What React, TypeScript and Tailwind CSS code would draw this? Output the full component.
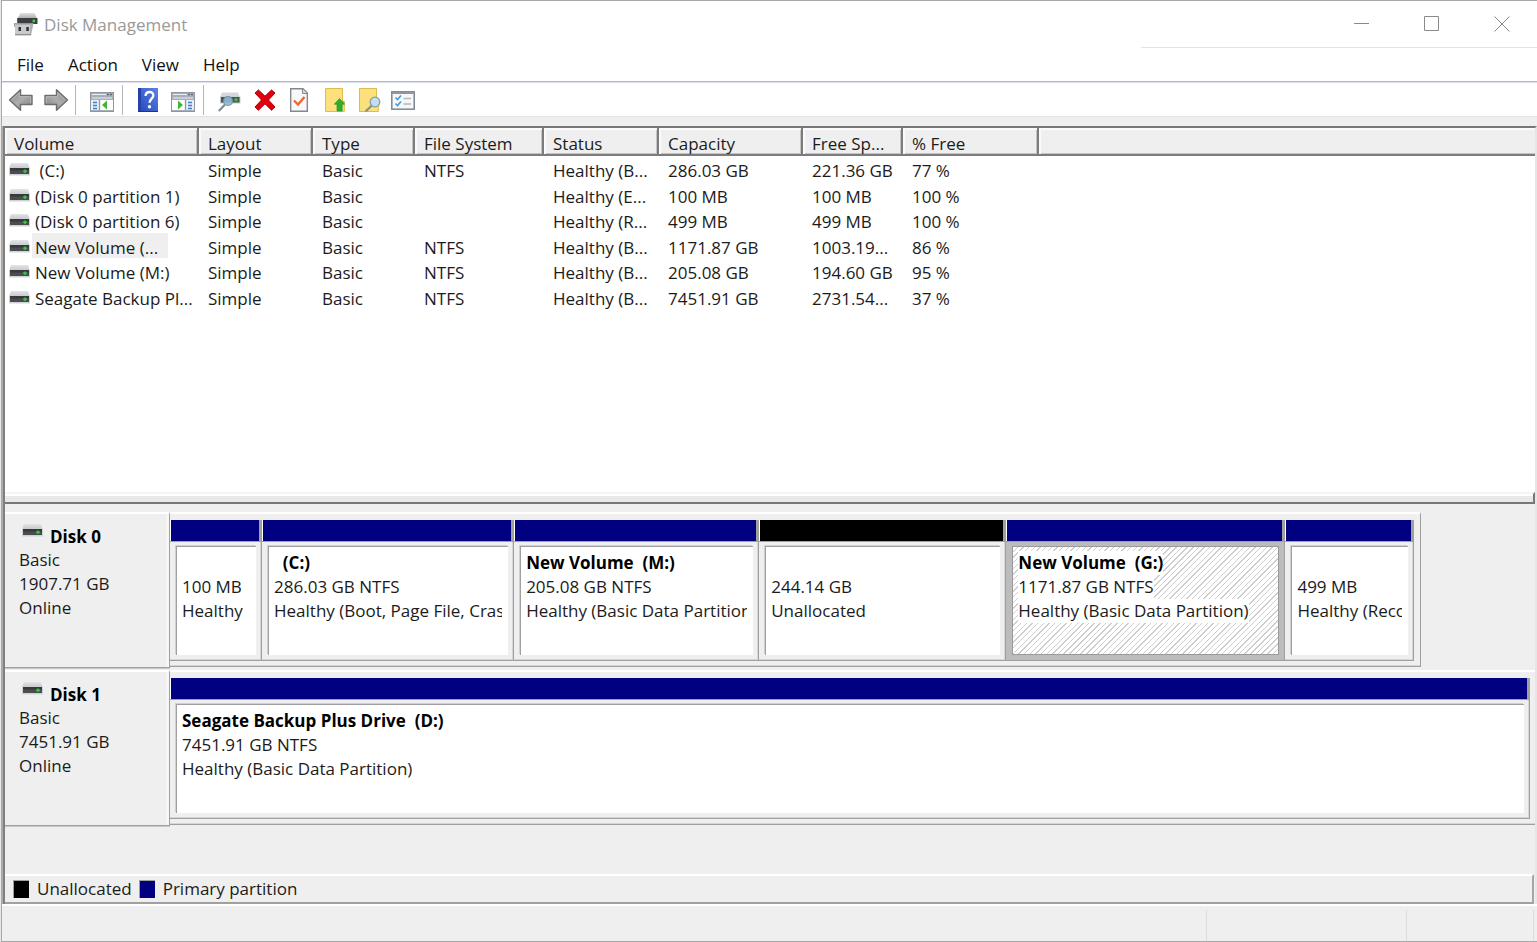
import React, { type ReactNode } from "react";

const HATCH =
  "bg-[repeating-linear-gradient(135deg,#ffffff_0px,#ffffff_3px,#cecece_3px,#cecece_4px)]";

type Volume = { name: string; cells: string[]; selected?: boolean; indent?: boolean };

const columns = [
  { label: "Volume", width: "w-[194px]" },
  { label: "Layout", width: "w-[114px]" },
  { label: "Type", width: "w-[102px]" },
  { label: "File System", width: "w-[129px]" },
  { label: "Status", width: "w-[115px]" },
  { label: "Capacity", width: "w-[144px]" },
  { label: "Free Sp...", width: "w-[100px]" },
  { label: "% Free", width: "w-[136px]" },
];

const volumes: Volume[] = [
  { name: "(C:)", indent: true, cells: ["Simple", "Basic", "NTFS", "Healthy (B...", "286.03 GB", "221.36 GB", "77 %"] },
  { name: "(Disk 0 partition 1)", cells: ["Simple", "Basic", "", "Healthy (E...", "100 MB", "100 MB", "100 %"] },
  { name: "(Disk 0 partition 6)", cells: ["Simple", "Basic", "", "Healthy (R...", "499 MB", "499 MB", "100 %"] },
  { name: "New Volume (...", selected: true, cells: ["Simple", "Basic", "NTFS", "Healthy (B...", "1171.87 GB", "1003.19...", "86 %"] },
  { name: "New Volume (M:)", cells: ["Simple", "Basic", "NTFS", "Healthy (B...", "205.08 GB", "194.60 GB", "95 %"] },
  { name: "Seagate Backup Pl...", cells: ["Simple", "Basic", "NTFS", "Healthy (B...", "7451.91 GB", "2731.54...", "37 %"] },
];

type Partition = {
  title?: string;
  size: string;
  status: string;
  share: number;
  unallocated?: boolean;
  selected?: boolean;
};

type Disk = { name: string; size: string; share: number; rest: number; partitions: Partition[] };

const disks: Disk[] = [
  {
    name: "Disk 0",
    size: "1907.71 GB",
    share: 1250,
    rest: 115,
    partitions: [
      { size: "100 MB", status: "Healthy", share: 92 },
      { title: "\u00a0 (C:)", size: "286.03 GB NTFS", status: "Healthy (Boot, Page File, Crash", share: 252 },
      { title: "New Volume \u00a0(M:)", size: "205.08 GB NTFS", status: "Healthy (Basic Data Partition", share: 245 },
      { size: "244.14 GB", status: "Unallocated", share: 247, unallocated: true },
      { title: "New Volume \u00a0(G:)", size: "1171.87 GB NTFS", status: "Healthy (Basic Data Partition)", share: 279, selected: true },
      { size: "499 MB", status: "Healthy (Reco", share: 129 },
    ],
  },
  {
    name: "Disk 1",
    size: "7451.91 GB",
    share: 1365,
    rest: 0,
    partitions: [
      { title: "Seagate Backup Plus Drive \u00a0(D:)", size: "7451.91 GB NTFS", status: "Healthy (Basic Data Partition)", share: 1 },
    ],
  },
];

function DriveIcon() {
  return (
    <svg width="21" height="13" viewBox="0 0 21 13" className="block shrink-0" aria-hidden="true">
      <defs>
        <linearGradient id="drive-top" x1="0" y1="0" x2="0" y2="1">
          <stop offset="0" stopColor="#e3e5e8" />
          <stop offset="1" stopColor="#c6cacd" />
        </linearGradient>
      </defs>
      <path d="M1.800 0h17.200l1.500 5H.3z" fill="url(#drive-top)" />
      <rect x="0" y="4.500" width="21" height="8" rx=".5" fill="#cfd3d8" />
      <rect x="1" y="5" width="19" height="6" fill="#4b4e50" />
      <rect x="1" y="5" width="19" height="2.500" fill="#37393b" />
      <path d="M14 8.200h4M16 6.400v3.600" stroke="#2fdc3a" strokeWidth="1.300" />
    </svg>
  );
}

function AppIcon() {
  return (
    <svg width="24" height="24" viewBox="0 0 24 24" className="block" aria-hidden="true">
      <defs>
        <linearGradient id="app-top" x1="0" y1="0" x2="0" y2="1">
          <stop offset="0" stopColor="#e0e2e4" />
          <stop offset="1" stopColor="#a9acaf" />
        </linearGradient>
      </defs>
      <path d="M6.500 0h14l2.500 5.500H3.500z" fill="url(#app-top)" />
      <path d="M3.200 5h20.300v6H3.200z" fill="#3c3f41" />
      <circle cx="19.800" cy="8" r="1.400" fill="#3bd63f" />
      <path d="M.3 10h4v4h-4z" fill="#77797b" />
      <path d="M1 10.500h18.300l-2.300 11.700H1z" fill="#c9cacc" />
      <path d="M1 10.500h18.300v1.200H1z" fill="#a6a8aa" />
      <path d="M1 21h16.200v1.300H1z" fill="#8f9193" />
      <path d="M16 11.500h3.300l-2.200 9.500H16z" fill="#b0b2b4" />
      <path d="M4.500 14h2.500v4H4.500zM12.300 14h2.500v4h-2.500z" fill="#333333" />
    </svg>
  );
}

function ArrowIcon({ right = false }: { right?: boolean }) {
  return (
    <svg width="26" height="24" viewBox="0 0 26 24" className="block" aria-hidden="true">
      <defs>
        <linearGradient id={right ? "arrow-r" : "arrow-l"} x1="0" y1="0" x2="1" y2="1">
          <stop offset="0" stopColor="#8a8a8a" />
          <stop offset="0.5" stopColor="#acacac" />
          <stop offset="1" stopColor="#7c7c7c" />
        </linearGradient>
      </defs>
      <g transform={right ? "translate(26 0) scale(-1 1)" : undefined}>
        <path
          d="M1.500 12 12.500 1.800v5.700h11.500v9H12.500v5.700z"
          fill={right ? "url(#arrow-r)" : "url(#arrow-l)"}
          stroke="#6c6c6c"
          strokeWidth="1.400"
          strokeLinejoin="round"
        />
        <path d="M3.500 12 11.300 4.700v4h11.400v6.600" fill="none" stroke="#bdbdbd" strokeWidth=".9" />
      </g>
    </svg>
  );
}

function PaneIcon({ right = false }: { right?: boolean }) {
  return (
    <svg width="24" height="20" viewBox="0 0 24 20" className="block" aria-hidden="true">
      <rect x=".5" y=".5" width="23" height="19" fill="#fff" stroke="#8f969f" />
      <rect x="1" y="1" width="22" height="7" fill="#a7afba" />
      <path d="M2 2.500h14M2 6h20" stroke="#e9edf2" />
      <path d="M17 2.500h2M20 2.500h2" stroke="#5d6773" strokeWidth="1.500" />
      <g transform={right ? "translate(24 0) scale(-1 1)" : undefined}>
        <rect x="1" y="8" width="8" height="11" fill="#e8eef6" />
        <path d="M3 10.500h4M3 13.500h4M3 16.500h4" stroke="#3f7fc6" strokeWidth="1.400" />
        <path d="M9.500 8v11" stroke="#8f969f" strokeWidth="1.300" />
        <path d="M17 8.500v9L12 13z" fill="#3fb62f" />
      </g>
      <path d="M1 18.500h22" stroke="#a9afb7" />
    </svg>
  );
}

function HelpIcon() {
  return (
    <svg width="20" height="24" viewBox="0 0 20 24" className="block" aria-hidden="true">
      <defs>
        <linearGradient id="help-book" x1="0" y1="1" x2="1" y2="0">
          <stop offset="0" stopColor="#2446b8" />
          <stop offset="1" stopColor="#5c82e6" />
        </linearGradient>
      </defs>
      <rect width="20" height="24" fill="url(#help-book)" />
      <rect width="3" height="24" fill="#2343ab" />
      <path d="M0 23.500h20" stroke="#1b3590" />
      <path d="M7.500 8C7.800 5 9.700 3.900 11.800 4c2.700.200 4 2 3.400 4.400C14.600 10.700 11.700 11.200 11.600 14.700" fill="none" stroke="#fff" strokeWidth="2.300" />
      <circle cx="11.500" cy="18.800" r="1.700" fill="#fff" />
    </svg>
  );
}

function RescanIcon() {
  return (
    <svg width="23" height="20" viewBox="0 0 23 20" className="block" aria-hidden="true">
      <path d="M4 .5h16l2 5H2z" fill="#d5d7da" />
      <rect x="2" y="4.500" width="20.500" height="7" fill="#c6cacd" />
      <rect x="3" y="5" width="18.500" height="5.500" fill="#4f5356" />
      <path d="M16 7.800h4M18 6v3.600" stroke="#2fd43a" strokeWidth="1.300" />
      <circle cx="10" cy="9" r="4.500" fill="#8fb9d6" fillOpacity=".9" stroke="#6f93ab" strokeWidth="1.100" />
      <path d="M7 12.500.8 19" stroke="#7e8c96" strokeWidth="2.200" />
    </svg>
  );
}

function DeleteIcon() {
  return (
    <svg width="22" height="22" viewBox="0 0 22 22" className="block" aria-hidden="true">
      <path
        d="M1 4 4.500 1 11 7.200 17.500 1 21 4l-6.500 7 6.500 7-3.500 3.200L11 14.800l-6.500 6.400L1 18l6.500-7z"
        fill="#e2000f"
        stroke="#a8000b"
      />
    </svg>
  );
}

function PropertiesIcon() {
  return (
    <svg width="18" height="24" viewBox="0 0 18 24" className="block" aria-hidden="true">
      <path d="M.7.7h12.300l4.300 4.300v18.300H.7z" fill="#f7f8fa" stroke="#85898e" strokeWidth="1.400" />
      <path d="M12.500 1v4.500H17" fill="#d8dbe0" stroke="#85898e" />
      <path d="m4 12.500 4 4 6.500-7.500" fill="none" stroke="#f0642d" strokeWidth="2.300" />
    </svg>
  );
}

function FolderUpIcon() {
  return (
    <svg width="20" height="24" viewBox="0 0 20 24" className="block" aria-hidden="true">
      <path d="M.5.5h17v13h1.800v10H.5z" fill="#fbe07c" stroke="#dfbc4d" />
      <path d="M17.500 13.500h1.800" fill="none" stroke="#c59d3d" />
      <path d="M14.500 10.500 19.700 16.200h-2.500V23h-5.200v-6.800H9.300z" fill="#2fae2b" stroke="#1e9420" strokeWidth=".6" />
    </svg>
  );
}

function FolderSearchIcon() {
  return (
    <svg width="22" height="24" viewBox="0 0 22 24" className="block" aria-hidden="true">
      <path d="M.5.500h17v13h1.800v10H.5z" fill="#fbe07c" stroke="#dfbc4d" />
      <path d="M12.800 17.500 6.500 23.500" stroke="#8b8e8c" strokeWidth="2.200" />
      <circle cx="16" cy="14" r="4.800" fill="#c4e0f0" stroke="#7f9db0" strokeWidth="1.300" />
    </svg>
  );
}

function ChecklistIcon() {
  return (
    <svg width="24" height="19" viewBox="0 0 24 19" className="block" aria-hidden="true">
      <rect x=".8" y=".8" width="22.400" height="17.400" fill="#f6f7f9" stroke="#7f868f" strokeWidth="1.500" />
      <path d="M1 2h22" stroke="#8f969f" strokeWidth="2" />
      <path d="m4.500 6.500 2 2 3.500-4M4.500 12.500l2 2 3.500-4" fill="none" stroke="#3d9be0" strokeWidth="1.600" />
      <path d="M12.500 7.500h7.500M12.500 13h7.500" stroke="#b4b7bb" strokeWidth="1.300" />
    </svg>
  );
}

function ToolButton({ label, className, children }: { label: string; className: string; children: ReactNode }) {
  return (
    <button type="button" aria-label={label} className={`flex h-8 shrink-0 items-center ${className}`}>
      {children}
    </button>
  );
}

function Separator({ className }: { className: string }) {
  return <span className={`h-[30px] w-px shrink-0 bg-[#b4b4b4] ${className}`} />;
}

function TitleBar() {
  return (
    <header className="flex h-[47px] shrink-0 items-center pl-3">
      <AppIcon />
      <h1 className="ml-[6px] flex-1 text-[17px] leading-6 text-[#999999]">Disk Management</h1>
      <div className="flex h-full w-[396px] items-center justify-end border-b border-[#e4e4e4] text-[#8a8a8a]">
        <button type="button" aria-label="Minimize" className="flex h-full w-[70px] items-center justify-center">
          <svg width="16" height="16" viewBox="0 0 16 16"><path d="M0 7.500h15" stroke="currentColor" /></svg>
        </button>
        <button type="button" aria-label="Maximize" className="flex h-full w-[70px] items-center justify-center">
          <svg width="16" height="16" viewBox="0 0 16 16"><path d="M.5.5h14v14H.5z" fill="none" stroke="currentColor" /></svg>
        </button>
        <button type="button" aria-label="Close" className="flex h-full w-[70px] items-center justify-center">
          <svg width="16" height="16" viewBox="0 0 16 16"><path d="m.5.5 15 15m0-15-15 15" stroke="currentColor" /></svg>
        </button>
      </div>
    </header>
  );
}

function MenuBar() {
  return (
    <nav className="flex h-[33px] shrink-0 items-center gap-6 pl-[15px] text-[17px] leading-6 text-[#111111]">
      {["File", "Action", "View", "Help"].map((item) => (
        <button type="button" key={item}>{item}</button>
      ))}
    </nav>
  );
}

function Toolbar() {
  return (
    <div className="flex h-[35px] shrink-0 items-center border-t border-[#b8b8b8] pt-[2px] pl-[6px] shadow-[inset_0_1px_0_#dde0ea]">
      <ToolButton label="Back" className=""><ArrowIcon /></ToolButton>
      <ToolButton label="Forward" className="ml-[9px]"><ArrowIcon right /></ToolButton>
      <Separator className="ml-[6px]" />
      <ToolButton label="Show or hide console tree" className="ml-[14px] pt-[3px]"><PaneIcon /></ToolButton>
      <Separator className="ml-[8px]" />
      <ToolButton label="Help" className="ml-[15px]"><HelpIcon /></ToolButton>
      <ToolButton label="Show or hide action pane" className="ml-[13px] pt-[3px]"><PaneIcon right /></ToolButton>
      <Separator className="ml-[8px]" />
      <ToolButton label="Rescan disks" className="ml-[14px] pt-[3px]"><RescanIcon /></ToolButton>
      <ToolButton label="Delete" className="ml-[13px]"><DeleteIcon /></ToolButton>
      <ToolButton label="Properties" className="ml-[14px]"><PropertiesIcon /></ToolButton>
      <ToolButton label="Open" className="ml-[17px]"><FolderUpIcon /></ToolButton>
      <ToolButton label="Explore" className="ml-[14px]"><FolderSearchIcon /></ToolButton>
      <ToolButton label="Settings" className="ml-[10px]"><ChecklistIcon /></ToolButton>
    </div>
  );
}

function VolumeList() {
  return (
    <div className="flex-1 overflow-hidden bg-white">
      <table className="w-full table-fixed border-separate border-spacing-0 text-left">
        <thead>
          <tr>
            {columns.map((c) => (
              <th key={c.label} className={`h-[28px] ${c.width} border-r-2 border-b-2 border-[#7c7c7c] bg-[#efefef] p-0 pt-[6px] pl-[9px] leading-5 font-normal whitespace-nowrap shadow-[inset_2px_2px_0_#fafafa,inset_-1px_-1px_0_#c4c4c4]`}>
                {c.label}
              </th>
            ))}
            <th aria-label="Empty" className="border-b-2 border-[#7c7c7c] bg-[#efefef] p-0 shadow-[inset_2px_2px_0_#fafafa,inset_0_-1px_0_#c4c4c4]" />
          </tr>
        </thead>
        <tbody>
          {volumes.map((v) => (
            <tr key={v.name} className="align-top odd:h-[26px] even:h-[25px]">
              <td className="p-0 pl-1">
                <div className="flex h-[25px] items-start leading-[30px]">
                  <div className="pt-[7px]">
                    <DriveIcon />
                  </div>
                  <span className={`ml-[2px] h-[25px] pl-[3px] whitespace-pre ${v.selected ? "bg-[#efefef] pr-[10px]" : ""}`}>
                    {v.indent ? " " : ""}{v.name}
                  </span>
                </div>
              </td>
              {v.cells.map((c, i) => (
                <td key={i} className="p-0 pl-[9px] whitespace-nowrap">
                  <div className="h-[25px] leading-[30px]">{c}</div>
                </td>
              ))}
              <td className="p-0" />
            </tr>
          ))}
        </tbody>
      </table>
    </div>
  );
}

function PartitionCell({ p }: { p: Partition }) {
  const frame = p.selected
    ? "bg-[#bcbcbc]"
    : "bg-[#efefef] shadow-[inset_-1px_-1px_0_#d6d6d6]";
  const box = p.selected
    ? `border border-[#9a9a9a] ${HATCH}`
    : "border-t border-l border-[#a0a0a0] bg-white shadow-[-1px_-1px_0_#d0d0d0]";
  const ink = p.selected ? "inline-block h-6 bg-white" : "";
  return (
    <button
      type="button"
      className="flex min-w-0 flex-col text-left"
      style={{ flex: `${p.share} 1 0px` }}
    >
      <span className="block h-[21px] w-full border-r-[3px] border-l border-r-[#a0a0a0] border-l-white">
        <span className={`block h-[21px] w-full ${p.unallocated ? "bg-black" : "bg-[#000080]"}`} />
      </span>
      <span className={`flex w-full flex-1 border-t border-r border-b border-[#a0a0a0] pt-[4px] pr-[5px] pb-[5px] pl-[6px] ${frame}`}>
        <span className={`block min-w-0 flex-1 overflow-hidden pt-[4px] pr-[6px] pl-[5px] ${box}`}>
          <span className="block h-6 overflow-hidden font-bold whitespace-pre text-black">
            <span className={ink}>{p.title ?? ""}</span>
          </span>
          <span className="block h-6 overflow-hidden whitespace-pre"><span className={ink}>{p.size}</span></span>
          <span className="block h-6 overflow-hidden whitespace-pre"><span className={ink}>{p.status}</span></span>
        </span>
      </span>
    </button>
  );
}

function DiskRow({ disk }: { disk: Disk }) {
  return (
    <section className="flex h-[158px] shrink-0 text-[17px] leading-6">
      <div className="mb-[2px] w-[165px] shrink-0 border-t-2 border-r border-b border-t-white border-r-[#a0a0a0] border-b-[#a0a0a0] pl-[14px] shadow-[inset_-3px_0_0_#f6f6f6,0_1px_0_#c8c8c8]">
        <div className="flex h-[34px] items-start pt-[10px] pl-[3px]">
          <DriveIcon />
          <h2 className="ml-[7px] leading-[26px] font-bold text-black">{disk.name}</h2>
        </div>
        <p>Basic</p>
        <p>{disk.size}</p>
        <p>Online</p>
      </div>
      <div className="flex min-w-0 flex-1">
        <div
          className={`mb-[3px] flex min-w-0 border-t-2 border-b border-t-white border-b-[#a0a0a0] pt-[6px] pr-[5px] pb-[5px] shadow-[inset_0_-1px_0_#d6d6d6] ${disk.rest > 0 ? "border-r border-r-[#a0a0a0]" : ""}`}
          style={{ flex: `${disk.share} 1 0px` }}
        >
          {disk.partitions.map((p) => (
            <PartitionCell key={p.size} p={p} />
          ))}
        </div>
        {disk.rest > 0 && <div style={{ flex: `${disk.rest} 1 0px` }} />}
      </div>
    </section>
  );
}

function Legend() {
  return (
    <footer className="mr-px flex h-[30px] shrink-0 items-center border-t-2 border-r-2 border-b-2 border-t-white border-r-[#a6a6a6] border-b-[#a0a0a0] pl-2 text-[17px] leading-6">
      <span className="h-[18px] w-4 border-t border-l border-[#a0a0a0] bg-black" />
      <span className="ml-2">Unallocated</span>
      <span className="ml-[7px] h-[18px] w-4 border-t border-l border-[#a0a0a0] bg-[#000080]" />
      <span className="ml-2">Primary partition</span>
    </footer>
  );
}

export default function App() {
  return (
    <div className="bg-[#e8e8e8] pl-px">
      <div className="flex min-h-screen flex-col border-t border-b border-l border-[#a8a8a8] bg-white font-['Open_Sans','Noto_Sans',sans-serif] text-[17px] leading-6 text-[#1b1b1b]">
        <TitleBar />
        <MenuBar />
        <Toolbar />
        <div className="h-[10px] shrink-0 border-t border-[#e2e2e2] bg-[#efefef]" />
        <div className="flex flex-1 flex-col border-l border-[#ababab]">
          <main className="flex flex-1 flex-col border-t-2 border-r-2 border-l-2 border-t-[#777777] border-r-[#e6e6e6] border-l-[#808080] bg-[#efefef]">
            <VolumeList />
            <div className="h-[12px] shrink-0 border-t-2 border-r-2 border-b-2 border-t-[#f4f4f4] border-r-[#777777] border-b-[#777777] bg-[#e8e8e8] shadow-[inset_0_2px_0_#ffffff]" />
            <div className="h-[8px] shrink-0" />
            <DiskRow disk={disks[0]} />
            <DiskRow disk={disks[1]} />
            <div className="h-[46px] shrink-0" />
            <Legend />
          </main>
        </div>
        <div className="flex h-[37px] shrink-0 justify-end border-t-2 border-white bg-[#efefef] pt-1">
          <div className="w-[200px] border-l border-[#dcdcdc]" />
          <div className="w-[128px] border-r border-l border-[#dcdcdc]" />
          <div className="w-[3px]" />
        </div>
      </div>
    </div>
  );
}
